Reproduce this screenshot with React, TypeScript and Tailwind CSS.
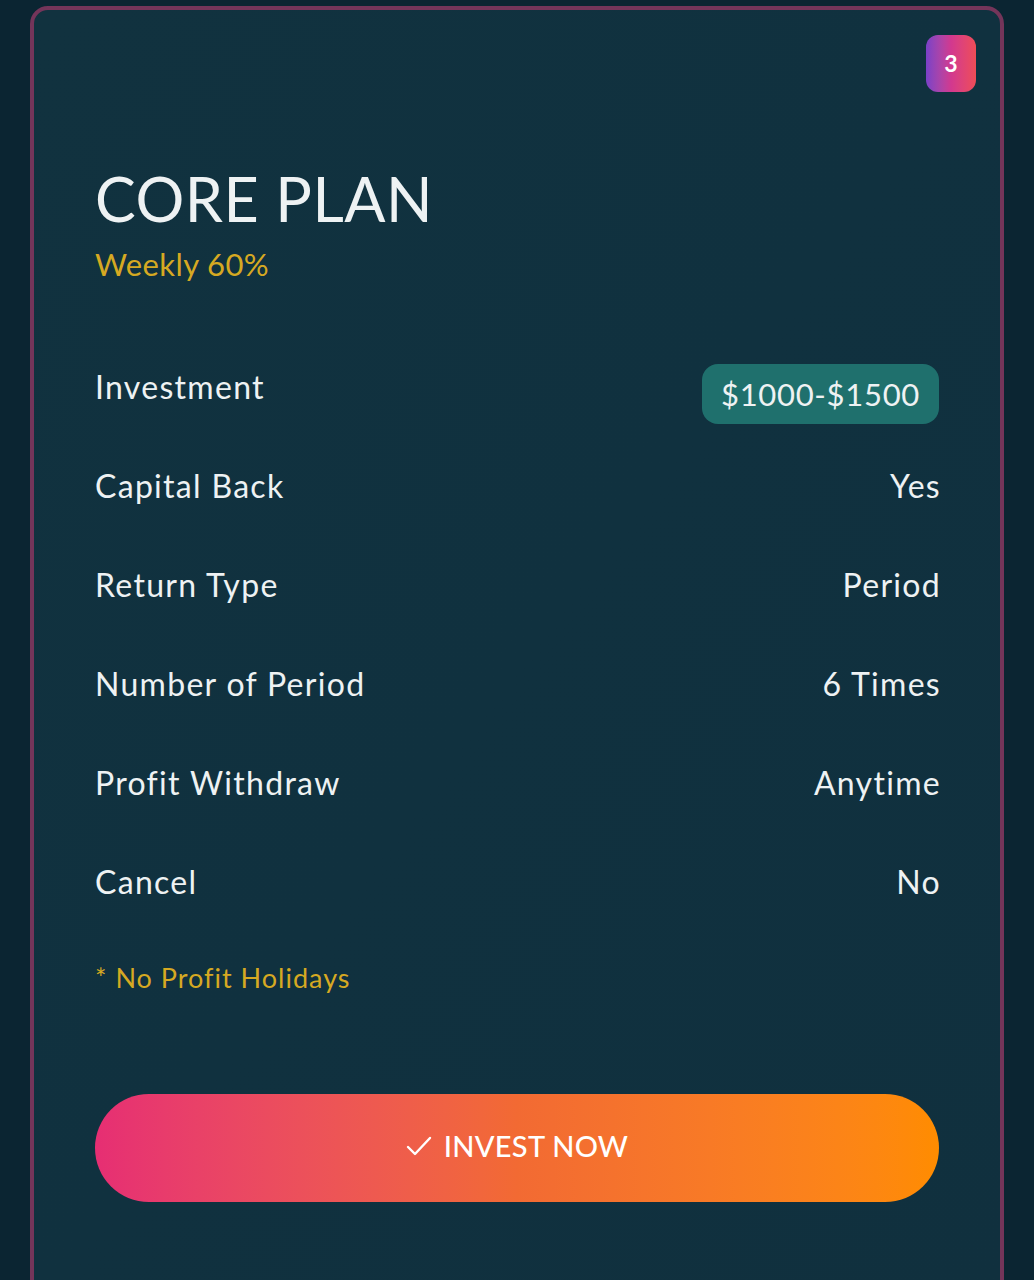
import React from "react";

const rows: [string, string][] = [
  ["Capital Back", "Yes"],
  ["Return Type", "Period"],
  ["Number of Period", "6 Times"],
  ["Profit Withdraw", "Anytime"],
  ["Cancel", "No"],
];

export default function App() {
  return (
    <div
      className="min-h-screen overflow-hidden bg-[#0b2532] px-[30px] pt-[6px]"
      style={{ fontFamily: "Lato, 'Open Sans', sans-serif" }}
    >
      <div className="relative h-[1300px] rounded-t-[18px] border-4 border-[#74355a] bg-gradient-to-br from-[#11323f] via-[#10313f] to-[#10303e] px-[61px]">
        <div className="absolute right-[24px] top-[25px] flex h-[57px] w-[50px] items-center justify-center rounded-[12px] bg-gradient-to-r from-[#7a40c8] via-[#d2388f] to-[#ef4c55] text-[23px] font-bold text-white">
          3
        </div>

        <h1 className="pt-[151px] text-[61px] leading-[76px] font-normal tracking-[0.5px] text-[#eef2f3]">
          CORE PLAN
        </h1>
        <p className="mt-[7px] text-[31px] leading-[40px] tracking-[0.4px] text-[#d6a922]">Weekly 60%</p>

        <div className="mt-[53px] flex flex-col text-[32px] leading-[40px] tracking-[1.3px] text-[#eef2f3]">
          <div className="flex h-[99px] items-center justify-between">
            <span>Investment</span>
            <span className="mt-[14px] rounded-[16px] bg-[#1f706d] px-[19px] py-[9px] text-[31px] leading-[42px] tracking-[0.7px]">
              $1000-$1500
            </span>
          </div>
          {rows.map(([k, v]) => (
            <div key={k} className="flex h-[99px] items-center justify-between">
              <span>{k}</span>
              <span className="mr-[-2px]">{v}</span>
            </div>
          ))}
        </div>

        <p className="mt-[29px] text-[27px] leading-[36px] tracking-[1px] text-[#d6a922]">* No Profit Holidays</p>

        <button className="mt-[98px] flex h-[108px] w-full items-center justify-center gap-[12px] rounded-full bg-gradient-to-r from-[#e62e73] via-[#f26a33] to-[#ff8c00] pb-[4px] text-[29px] font-medium tracking-[0.3px] text-white">
          <svg width="26" height="22" viewBox="0 0 26 22" fill="none" stroke="white" strokeWidth="2.4" strokeLinecap="round" strokeLinejoin="round">
            <path d="M2 12 L9 19 L24 3" />
          </svg>
          INVEST NOW
        </button>
      </div>
    </div>
  );
}
